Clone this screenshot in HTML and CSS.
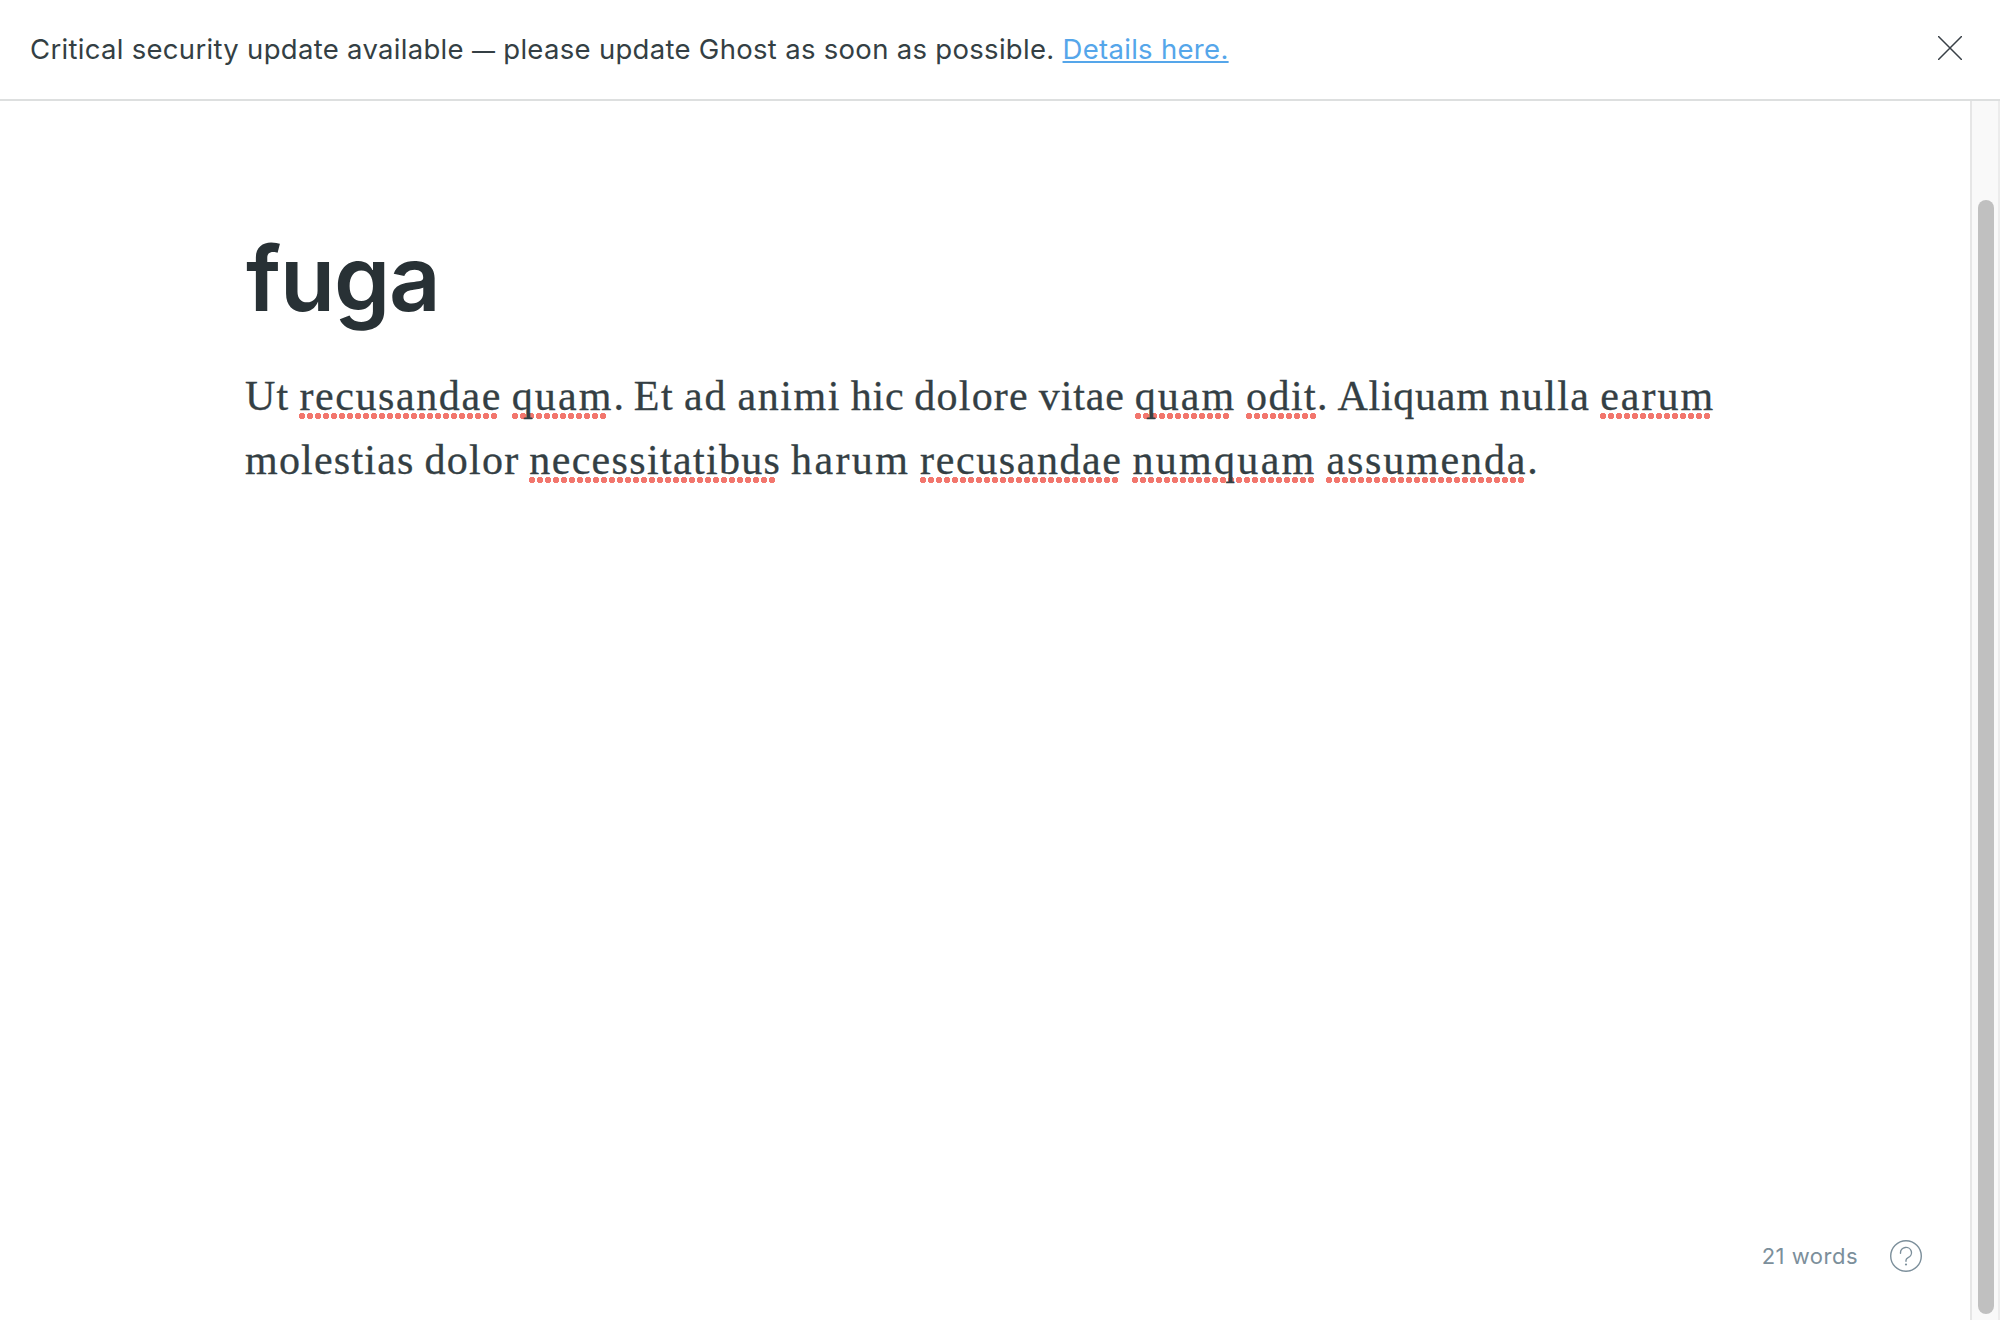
FILE: index.html
```
<!DOCTYPE html>
<html lang="en">
<head>
<meta charset="utf-8">
<title>Editor</title>
<link rel="stylesheet" href="styles.css">
</head>
<body>
<header class="alert">
  <p class="alert-text">Critical security update available <span class="dash">—</span> please update Ghost as soon as possible. <a class="alert-link" href="#">Details here.</a></p>
  <button class="alert-close" aria-label="Close"><svg width="24" height="24" viewBox="0 0 24 24"><path d="M0.5 0.5 23.5 23.5M23.5 0.5 0.5 23.5" fill="none" stroke="#394047" stroke-width="1.5" stroke-linecap="round"/></svg></button>
</header>
<div class="workspace">
  <main class="editor">
    <article class="post">
      <h1 class="title">fuga</h1>
      <p class="line"><span class="w125">Ut</span> <span class="w160 sp">recusandae</span> <span class="w207 sp">quam</span>. <span class="w150">Et</span> <span class="w200">ad</span> <span class="w155">animi</span> <span class="w080">hic</span> <span class="w120">dolore</span> <span class="w087">vitae</span> <span class="w207 sp">quam</span> <span class="w140 sp">odit</span>. <span class="w075">Aliquam</span> <span class="w136">nulla</span> <span class="w204 sp">earum</span></p>
      <p class="line"><span class="w120">molestias</span> <span class="w125">dolor</span> <span class="w133 sp">necessitatibus</span> <span class="w236">harum</span> <span class="w160 sp">recusandae</span> <span class="w230 sp">numquam</span> <span class="w184 sp">assumenda</span>.</p>
    </article>
    <footer class="status">
      <span class="count">21 words</span>
      <svg class="help" width="32" height="32" viewBox="0 0 32 32"><circle cx="16" cy="16" r="15.3" fill="none" stroke="#7c8f9b" stroke-width="1.4"/><path d="M10.5 13.2V12.8a5.5 5.3 0 1 1 7.6 4.8Q16 18.6 16 20.2V21.2" fill="none" stroke="#7c8f9b" stroke-width="1.4" stroke-linecap="round"/><circle cx="16" cy="24.5" r="1.1" fill="#7c8f9b"/></svg>
    </footer>
  </main>
  <aside class="scrollbar"><div class="thumb"></div></aside>
</div>
</body>
</html>
```
FILE: styles.css
```
* { box-sizing: border-box; }
body {
  margin: 0;
  height: 1320px;
  display: flex;
  flex-direction: column;
  overflow: hidden;
  background: #fff;
  color: #343f44;
  font-family: Inter, "Liberation Sans", sans-serif;
}
.alert {
  height: 101px;
  flex: none;
  display: flex;
  align-items: center;
  justify-content: space-between;
  padding: 0 38px 0 30px;
  border-bottom: 2px solid #dddfdf;
}
.alert-text {
  margin: 0;
  font-size: 27.5px;
  line-height: 40px;
  letter-spacing: 0.3px;
  white-space: nowrap;
}
.dash { font-size: 23px; }
.alert-link {
  color: #55a6ea;
  text-decoration-thickness: 2px;
  text-underline-offset: 2px;
  text-decoration-skip-ink: none;
}
.alert-close {
  display: flex;
  padding: 0;
  margin-bottom: 3px;
  border: 0;
  background: none;
}
.workspace { flex: 1; display: flex; min-height: 0; }
.editor {
  flex: 1;
  display: flex;
  flex-direction: column;
  justify-content: space-between;
  padding: 123px 48px 48px 245px;
}
.title {
  margin: 0 0 30px 1px;
  font-size: 90px;
  line-height: 110px;
  font-weight: 600;
  letter-spacing: -1.1px;
  color: #283135;
}
.line {
  margin: 0;
  font-family: "Liberation Serif", serif;
  font-size: 42px;
  line-height: 64px;
  word-spacing: -0.65px;
  white-space: nowrap;
  -webkit-text-stroke: 0.3px #343f44;
}
/* spelling marks: whole dots only, drawn beneath the letters */
.sp { position: relative; }
.sp::after {
  content: "";
  position: absolute;
  z-index: -1;
  left: 0;
  bottom: 0;
  width: round(down, 100% + 2px, 8px);
  height: 6px;
  background: radial-gradient(circle at 3px 3px, #f2766d 2.9px, transparent 3.5px) left top / 8px 6px repeat-x;
}
.w075 { letter-spacing: 0.75px; }
.w080 { letter-spacing: 0.8px; }
.w087 { letter-spacing: 0.87px; }
.w120 { letter-spacing: 1.22px; }
.w125 { letter-spacing: 1.26px; }
.w133 { letter-spacing: 1.33px; }
.w136 { letter-spacing: 1.36px; }
.w140 { letter-spacing: 1.4px; }
.w150 { letter-spacing: 1.5px; }
.w155 { letter-spacing: 1.55px; }
.w160 { letter-spacing: 1.6px; }
.w184 { letter-spacing: 1.84px; }
.w200 { letter-spacing: 2px; }
.w204 { letter-spacing: 2.04px; }
.w207 { letter-spacing: 2.07px; }
.w230 { letter-spacing: 2.3px; }
.w236 { letter-spacing: 2.36px; }
.status {
  display: flex;
  align-items: center;
  justify-content: flex-end;
  gap: 32px;
  color: #7c8f9b;
}
.count { font-size: 22px; line-height: 32px; letter-spacing: 0.5px; }
.help { display: block; }
.scrollbar {
  width: 30px;
  padding: 99px 4px 6px 6px;
  background: #f9f9f9;
  border-left: 2px solid #e6e6e6;
  border-right: 2px solid #ececec;
}
.thumb { height: 100%; border-radius: 8px; background: #c0c0c0; }
```
